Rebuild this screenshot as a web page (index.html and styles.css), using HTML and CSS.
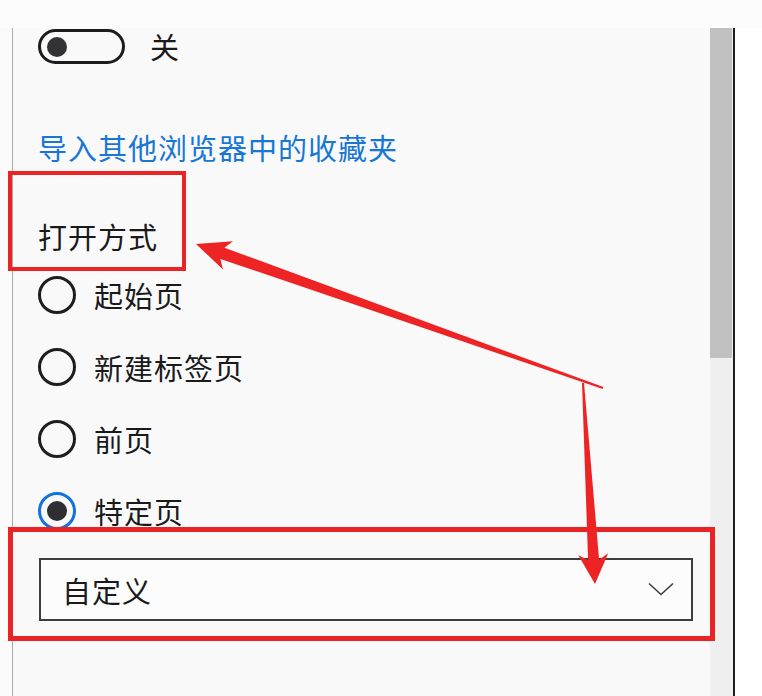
FILE: index.html
```html
<!DOCTYPE html>
<html lang="zh-CN">
<head>
<meta charset="utf-8">
<title>打开方式</title>
<link rel="stylesheet" href="styles.css">
</head>
<body>
<div class="top"></div>
<div class="main">
  <div class="panel">
    <div class="toggle-row">
      <span class="toggle"><span class="knob"></span></span>
      <span class="toggle-label">关</span>
    </div>
    <a class="link">导入其他浏览器中的收藏夹</a>
    <div class="heading">打开方式</div>
    <div class="radios">
      <div class="radio-row"><span class="radio"></span><span class="radio-label">起始页</span></div>
      <div class="radio-row"><span class="radio"></span><span class="radio-label">新建标签页</span></div>
      <div class="radio-row"><span class="radio"></span><span class="radio-label">前页</span></div>
      <div class="radio-row"><span class="radio checked"><span class="dot"></span></span><span class="radio-label">特定页</span></div>
    </div>
    <div class="select">
      <span class="select-text">自定义</span>
      <svg class="chevron" width="26" height="14" viewBox="0 0 26 14"><polyline points="1,1.5 13,12.5 25,1.5" fill="none" stroke="#3a3a3a" stroke-width="1.5"/></svg>
    </div>
  </div>
  <div class="scroll"><div class="thumb"></div></div>
  <div class="edge"></div>
  <div class="right"></div>
</div>

<div class="mark mark-heading"></div>
<div class="mark mark-select"></div>
<svg class="arrows" width="762" height="696" viewBox="0 0 762 696">
  <polygon fill="#ee2323" points="196,244 233,241.2 224.4,247.7 603.3,387.1 602.7,388.9 220.4,258.9 223,269.4"/>
  <polygon fill="#ee2323" points="595,584 608.2,553.2 599.1,559.7 584,382.9 582,383.1 588.1,560.3 578.2,555"/>
</svg>
</body>
</html>
```

FILE: styles.css
```css
html, body {
  margin: 0;
  padding: 0;
}
body {
  width: 762px;
  height: 696px;
  overflow: hidden;
  position: relative;
  background: #fafafa;
  font-family: "Noto Sans CJK SC", "Noto Sans", sans-serif;
  color: #1a1a1a;
}
.top {
  height: 28px;
  background: #fcfcfc;
}
.main {
  display: flex;
  height: 668px;
}
.panel {
  width: 672px;
  margin-left: 12px;
  border-left: 1px solid #a9a9a9;
  padding-left: 25px;
  display: flex;
  flex-direction: column;
  align-items: flex-start;
  background: #f9f9fa;
}
.toggle-row {
  margin-top: 1px;
  height: 35px;
  display: flex;
  align-items: center;
}
.toggle {
  box-sizing: border-box;
  width: 87px;
  height: 35px;
  border: 3px solid #1c1c1c;
  border-radius: 18px;
  display: flex;
  align-items: center;
}
.knob {
  width: 20px;
  height: 20px;
  border-radius: 50%;
  background: #333336;
  margin-left: 6px;
}
.toggle-label {
  margin-left: 25px;
  font-size: 29px;
  line-height: 35px;
}
.link {
  margin-top: 63px;
  font-size: 29px;
  line-height: 40px;
  letter-spacing: 1px;
  color: #1877d2;
}
.heading {
  margin-top: 49px;
  font-size: 29px;
  line-height: 40px;
  letter-spacing: 1px;
}
.radios {
  margin-top: 3px;
  display: flex;
  flex-direction: column;
}
.radio-row {
  height: 72px;
  display: flex;
  align-items: center;
}
.radio {
  box-sizing: border-box;
  width: 38px;
  height: 38px;
  border: 3px solid #1e1e1e;
  border-radius: 50%;
  display: flex;
  align-items: center;
  justify-content: center;
}
.radio.checked {
  border-color: #1273de;
}
.dot {
  width: 20px;
  height: 20px;
  border-radius: 50%;
  background: #2f2f33;
}
.radio-label {
  margin-left: 18px;
  font-size: 29px;
  line-height: 40px;
  letter-spacing: 1px;
}
.select {
  box-sizing: border-box;
  margin-top: 11px;
  margin-left: 1px;
  width: 654px;
  height: 63px;
  border: 2px solid #3d3d3d;
  background: #fcfcfc;
  display: flex;
  align-items: center;
  justify-content: space-between;
  padding: 0 17px 0 21px;
}
.select-text {
  font-size: 29px;
  line-height: 40px;
  letter-spacing: 1px;
}
.chevron {
  display: block;
  margin-top: -2px;
}
.scroll {
  width: 23px;
  background: #efeff0;
}
.thumb {
  height: 330px;
  width: 22px;
  background: #c1c1c1;
}
.edge {
  width: 2px;
  background: #1e1e1e;
}
.right {
  flex: 1;
  background: #ffffff;
}
.mark {
  position: absolute;
  box-sizing: border-box;
  border-style: solid;
  border-color: #ea2424;
}
.mark-heading {
  left: 8px;
  top: 171px;
  width: 178px;
  height: 100px;
  border-width: 4px;
}
.mark-select {
  left: 8px;
  top: 527px;
  width: 707px;
  height: 114px;
  border-width: 5px;
}
.arrows {
  position: absolute;
  left: 0;
  top: 0;
  pointer-events: none;
}
```
